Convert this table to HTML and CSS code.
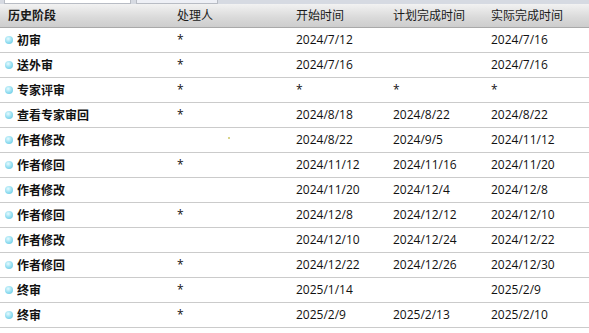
FILE: index.html
```html
<!DOCTYPE html>
<html>
<head>
<meta charset="utf-8">
<link rel="stylesheet" href="styles.css">
</head>
<body>
<div class="topstrip"><span class="tab tab1"></span><span class="tab tab2"></span></div>
<div class="grid">
  <div class="row head">
    <div class="cell first">历史阶段</div>
    <div class="cell">处理人</div>
    <div class="cell">开始时间</div>
    <div class="cell">计划完成时间</div>
    <div class="cell">实际完成时间</div>
  </div>
  <div class="row"><div class="cell stage"><i class="dot"></i>初审</div><div class="cell">*</div><div class="cell">2024/7/12</div><div class="cell"></div><div class="cell">2024/7/16</div></div>
  <div class="row"><div class="cell stage"><i class="dot"></i>送外审</div><div class="cell">*</div><div class="cell">2024/7/16</div><div class="cell"></div><div class="cell">2024/7/16</div></div>
  <div class="row"><div class="cell stage"><i class="dot"></i>专家评审</div><div class="cell">*</div><div class="cell">*</div><div class="cell">*</div><div class="cell">*</div></div>
  <div class="row"><div class="cell stage"><i class="dot"></i>查看专家审回</div><div class="cell">*</div><div class="cell">2024/8/18</div><div class="cell">2024/8/22</div><div class="cell">2024/8/22</div></div>
  <div class="row"><div class="cell stage"><i class="dot"></i>作者修改</div><div class="cell"><span class="speck"></span></div><div class="cell">2024/8/22</div><div class="cell">2024/9/5</div><div class="cell">2024/11/12</div></div>
  <div class="row"><div class="cell stage"><i class="dot"></i>作者修回</div><div class="cell">*</div><div class="cell">2024/11/12</div><div class="cell">2024/11/16</div><div class="cell">2024/11/20</div></div>
  <div class="row"><div class="cell stage"><i class="dot"></i>作者修改</div><div class="cell"></div><div class="cell">2024/11/20</div><div class="cell">2024/12/4</div><div class="cell">2024/12/8</div></div>
  <div class="row"><div class="cell stage"><i class="dot"></i>作者修回</div><div class="cell">*</div><div class="cell">2024/12/8</div><div class="cell">2024/12/12</div><div class="cell">2024/12/10</div></div>
  <div class="row"><div class="cell stage"><i class="dot"></i>作者修改</div><div class="cell"></div><div class="cell">2024/12/10</div><div class="cell">2024/12/24</div><div class="cell">2024/12/22</div></div>
  <div class="row"><div class="cell stage"><i class="dot"></i>作者修回</div><div class="cell">*</div><div class="cell">2024/12/22</div><div class="cell">2024/12/26</div><div class="cell">2024/12/30</div></div>
  <div class="row"><div class="cell stage"><i class="dot"></i>终审</div><div class="cell">*</div><div class="cell">2025/1/14</div><div class="cell"></div><div class="cell">2025/2/9</div></div>
  <div class="row"><div class="cell stage"><i class="dot"></i>终审</div><div class="cell">*</div><div class="cell">2025/2/9</div><div class="cell">2025/2/13</div><div class="cell">2025/2/10</div></div>
</div>
</body>
</html>
```
FILE: styles.css
```css
html, body {
  margin: 0;
  padding: 0;
  background: #fff;
  width: 589px;
  height: 333px;
  overflow: hidden;
  font-family: "Open Sans", "Noto Sans CJK SC", sans-serif;
  font-size: 12px;
  color: #111;
}
.topstrip {
  height: 4px;
  background: #d6dae2;
  display: flex;
  gap: 5px;
  padding-left: 4px;
  box-sizing: border-box;
}
.tab {
  display: block;
  height: 3px;
  background: #fff;
  border: 1px solid #b8bcc4;
  border-top: none;
}
.tab1 { width: 125px; }
.tab2 { width: 80px; background: #eef0f6; }
.grid {
  display: flex;
  flex-direction: column;
}
.row {
  display: grid;
  grid-template-columns: 172px 119px 97px 98px 1fr;
  height: 24px;
  border-bottom: 1px solid #cbcbcb;
  align-items: center;
}
.head {
  height: 23px;
  background: linear-gradient(#f2f2f2, #d9d9d9 60%, #cdcdcd);
  border-bottom: 1px solid #a9a9a9;
  color: #1a1a1a;
}
.cell {
  padding-left: 5px;
  white-space: nowrap;
  font-family: "Open Sans", "Noto Sans CJK SC", sans-serif;
  font-size: 12px;
  line-height: 16px;
  display: flex;
  align-items: center;
}
.head .first {
  padding-left: 8px;
  font-weight: bold;
}
.stage {
  font-weight: bold;
  font-family: "Noto Sans CJK SC", sans-serif;
}
.dot {
  width: 8px;
  height: 8px;
  border-radius: 50%;
  background: radial-gradient(circle at 40% 35%, #e6fbff, #8fdcf0 55%, #5cc2de);
  margin-right: 4px;
  flex: none;
}
.speck {
  width: 2px;
  height: 2px;
  background: #d8d48a;
  margin-left: 51px;
  margin-top: -4px;
}
```
